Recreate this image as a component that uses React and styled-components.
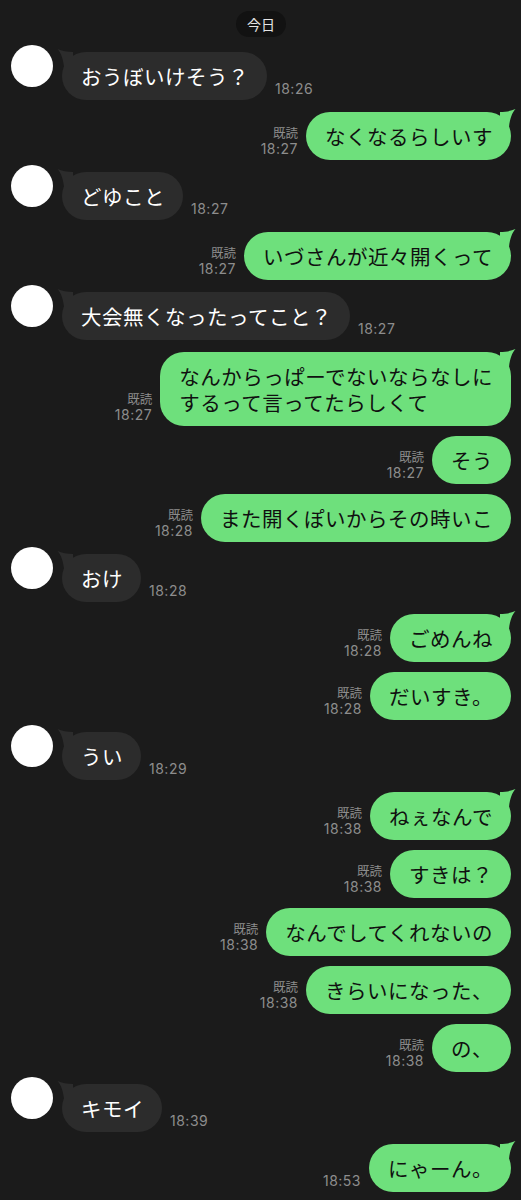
import styled, { createGlobalStyle } from 'styled-components'

const GREEN = '#6ee07c'
const GRAY = '#2c2c2c'

const messages = [
  { from: 'them', text: 'おうぼいけそう？', time: '18:26' },
  { from: 'me', text: 'なくなるらしいす', time: '18:27', read: true },
  { from: 'them', text: 'どゆこと', time: '18:27' },
  { from: 'me', text: 'いづさんが近々開くって', time: '18:27', read: true },
  { from: 'them', text: '大会無くなったってこと？', time: '18:27' },
  { from: 'me', text: 'なんからっぱーでないならなしに\nするって言ってたらしくて', time: '18:27', read: true },
  { from: 'me', text: 'そう', time: '18:27', read: true },
  { from: 'me', text: 'また開くぽいからその時いこ', time: '18:28', read: true },
  { from: 'them', text: 'おけ', time: '18:28' },
  { from: 'me', text: 'ごめんね', time: '18:28', read: true },
  { from: 'me', text: 'だいすき。', time: '18:28', read: true },
  { from: 'them', text: 'うい', time: '18:29' },
  { from: 'me', text: 'ねぇなんで', time: '18:38', read: true },
  { from: 'me', text: 'すきは？', time: '18:38', read: true },
  { from: 'me', text: 'なんでしてくれないの', time: '18:38', read: true },
  { from: 'me', text: 'きらいになった、', time: '18:38', read: true },
  { from: 'me', text: 'の、', time: '18:38', read: true },
  { from: 'them', text: 'キモイ', time: '18:39' },
  { from: 'me', text: 'にゃーん。', time: '18:53' },
]

const App = () => {
  return <Screen>
    <GlobalStyle />
    <DatePill>今日</DatePill>
    {messages.map((m, i) => {
      const first = i === 0 || messages[i - 1].from !== m.from
      return m.from === 'them' ? (
        <Row key={i} $first={first} $mine={false}>
          <Avatar />
          <Bubble $mine={false}>
            {first && <Tail $mine={false} />}
            {m.text}
          </Bubble>
          <Meta $mine={false}>{m.time}</Meta>
        </Row>
      ) : (
        <Row key={i} $first={first} $mine>
          <Meta $mine>
            {m.read && <ReadMark>既読</ReadMark>}
            <div>{m.time}</div>
          </Meta>
          <Bubble $mine>
            {first && <Tail $mine />}
            {m.text}
          </Bubble>
        </Row>
      )
    })}
  </Screen>
}

const Tail = ({ $mine }) => (
  <TailSvg $mine={$mine} width="16" height="18" viewBox="0 0 16 18">
    <path d="M0 3 C6 3 11 2 15.5 0 C12 4 10 9 9 18 L0 18 Z" fill={$mine ? GREEN : GRAY} />
  </TailSvg>
)

export default App

const GlobalStyle = createGlobalStyle`
  html, body {
    margin: 0;
    padding: 0;
    background: #1b1b1b;
  }
`

const Screen = styled.div`
  width: 521px;
  min-height: 1200px;
  box-sizing: border-box;
  background: #1b1b1b;
  padding-top: 11px;
  display: flex;
  flex-direction: column;
  font-family: "Noto Sans CJK JP", sans-serif;
`

const DatePill = styled.div`
  align-self: center;
  margin-left: 1px;
  margin-bottom: 3px;
  height: 26px;
  line-height: 26px;
  padding: 0 11px;
  border-radius: 13px;
  background: #121212;
  color: #e4e4e4;
  font-size: 14px;
`

const Row = styled.div`
  display: flex;
  align-items: flex-end;
  justify-content: ${p => (p.$mine ? 'flex-end' : 'flex-start')};
  margin-top: ${p => (p.$first ? '12px' : '10px')};
  padding: ${p => (p.$mine ? '0 10px 0 0' : '0 0 0 11px')};
`

const Avatar = styled.div`
  align-self: flex-start;
  margin-top: -7px;
  width: 42px;
  height: 42px;
  border-radius: 50%;
  background: #ffffff;
  margin-right: 9px;
  flex-shrink: 0;
`

const Bubble = styled.div`
  position: relative;
  padding: 11px 18px 11px 19px;
  border-radius: 24px;
  font-size: 20.5px;
  line-height: 26px;
  white-space: pre-wrap;
  letter-spacing: 0.5px;
  background: ${p => (p.$mine ? GREEN : GRAY)};
  color: ${p => (p.$mine ? '#101010' : '#ffffff')};
`

const TailSvg = styled.svg`
  position: absolute;
  top: -3px;
  ${p => (p.$mine ? 'right: -5px;' : 'left: -5px; transform: scaleX(-1);')}
`

const Meta = styled.div`
  font-family: "Inter", "Noto Sans CJK JP", sans-serif;
  font-size: 14px;
  letter-spacing: 0.5px;
  line-height: 16px;
  color: #8d8d8d;
  text-align: ${p => (p.$mine ? 'right' : 'left')};
  margin: ${p => (p.$mine ? '0 8px 3px 0' : '0 0 3px 8px')};
`

const ReadMark = styled.div`
  font-family: "Noto Sans CJK JP", sans-serif;
  font-size: 12.5px;
  letter-spacing: 0;
`
